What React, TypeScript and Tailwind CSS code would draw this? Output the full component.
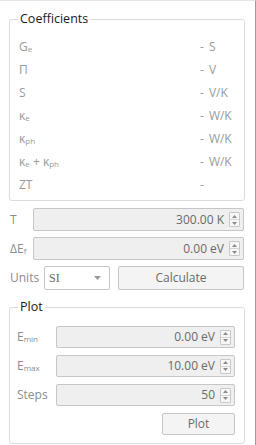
import React from 'react';

const font = { fontFamily: '"Open Sans", "Noto Sans", sans-serif' };

const Spin = () => (
  <div className="flex flex-col w-[11px] h-[15px] border border-[#c8c8c8] bg-[#f7f7f7] rounded-[1px] ml-[5px] mr-[3px]">
    <div className="flex-1 flex items-center justify-center border-b border-[#d4d4d4]">
      <svg width="5" height="3" viewBox="0 0 5 3"><path d="M0 3 L2.5 0 L5 3 Z" fill="#8a8a8a" /></svg>
    </div>
    <div className="flex-1 flex items-center justify-center">
      <svg width="5" height="3" viewBox="0 0 5 3"><path d="M0 0 L2.5 3 L5 0 Z" fill="#8a8a8a" /></svg>
    </div>
  </div>
);

const SpinInput = ({ value, className }: { value: string; className: string }) => (
  <div className={`flex items-center justify-end border border-[#c6c6c6] bg-[#efefef] rounded-[2px] text-[12px] text-[#6a6a6a] ${className}`}>
    <span>{value}</span>
    <Spin />
  </div>
);

const Sub = ({ children }: { children: React.ReactNode }) => (
  <sub className="text-[8px] relative top-[1px]">{children}</sub>
);

const rows: { label: React.ReactNode; unit: string }[] = [
  { label: <>G<Sub>e</Sub></>, unit: 'S' },
  { label: <>Π</>, unit: 'V' },
  { label: <>S</>, unit: 'V/K' },
  { label: <>κ<Sub>e</Sub></>, unit: 'W/K' },
  { label: <>κ<Sub>ph</Sub></>, unit: 'W/K' },
  { label: <>κ<Sub>e</Sub> + κ<Sub>ph</Sub></>, unit: 'W/K' },
  { label: <>ZT</>, unit: '' },
];

const Group = ({ title, className, children }: { title: string; className: string; children: React.ReactNode }) => (
  <div className={`relative border border-[#dcdcdc] rounded-[3px] ${className}`}>
    <span className="absolute -top-[10px] left-[8px] bg-white px-[2px] text-[12.5px] text-[#1a1a1a] leading-[18px]">{title}</span>
    {children}
  </div>
);

export default function App() {
  return (
    <div className="w-[256px] h-[445px] bg-white border-t border-[#e6e6e6] border-r border-r-[#9c9c9c] overflow-hidden" style={font}>
      <div className="pl-[9px] pr-[10px]">
        <Group title="Coefficients" className="mt-[18px] w-[236px] h-[182px] pt-[15px] pl-[9px]">
          {rows.map((r, i) => (
            <div key={i} className="flex items-center h-[23px] text-[12px] text-[#9a9a9a]">
              <div className="flex-1">{r.label}</div>
              <div className="w-[44px] flex">
                <span>-</span>
                <span className="ml-[5px]">{r.unit}</span>
              </div>
            </div>
          ))}
        </Group>

        <div className="flex items-center mt-[7px] h-[23px]">
          <span className="w-[24px] pl-[1px] text-[12px] text-[#8c8c8c]">T</span>
          <SpinInput value="300.00 K" className="w-[211px] h-[23px]" />
        </div>
        <div className="flex items-center mt-[6px] h-[23px]">
          <span className="w-[24px] pl-[1px] text-[12px] text-[#8c8c8c]">ΔE<Sub>f</Sub></span>
          <SpinInput value="0.00 eV" className="w-[211px] h-[23px]" />
        </div>
        <div className="flex items-center mt-[6px] h-[24px]">
          <span className="w-[35px] pl-[1px] text-[12px] text-[#8c8c8c]">Units</span>
          <div className="w-[66px] h-[24px] flex items-center border border-[#c6c6c6] bg-white rounded-[2px] px-[4px] text-[12px] text-[#6a6a6a]">
            <span className="flex-1" style={{ fontFamily: '"Liberation Serif", serif' }}>SI</span>
            <svg width="7" height="4" viewBox="0 0 7 4" className="mr-[4px]"><path d="M0 0 L3.5 4 L7 0 Z" fill="#9a9a9a" /></svg>
          </div>
          <div className="ml-[8px] w-[126px] h-[24px] flex items-center justify-center border border-[#c6c6c6] bg-[#f4f4f4] rounded-[2px] text-[12px] text-[#6a6a6a]">
            Calculate
          </div>
        </div>

        <Group title="Plot" className="mt-[17px] w-[236px] h-[137px] pt-[18px] pl-[7px]">
          {[
            { label: <>E<Sub>min</Sub></>, value: '0.00 eV' },
            { label: <>E<Sub>max</Sub></>, value: '10.00 eV' },
            { label: <>Steps</>, value: '50' },
          ].map((r, i) => (
            <div key={i} className="flex items-center h-[22px] mb-[7px]">
              <span className="w-[39px] text-[12px] text-[#8c8c8c]">{r.label}</span>
              <SpinInput value={r.value} className="w-[179px] h-[22px]" />
            </div>
          ))}
          <div className="flex justify-end pr-[9px] mt-[1px]">
            <div className="w-[73px] h-[22px] flex items-center justify-center border border-[#c6c6c6] bg-[#f4f4f4] rounded-[2px] text-[12px] text-[#6a6a6a]">
              Plot
            </div>
          </div>
        </Group>
      </div>
    </div>
  );
}
